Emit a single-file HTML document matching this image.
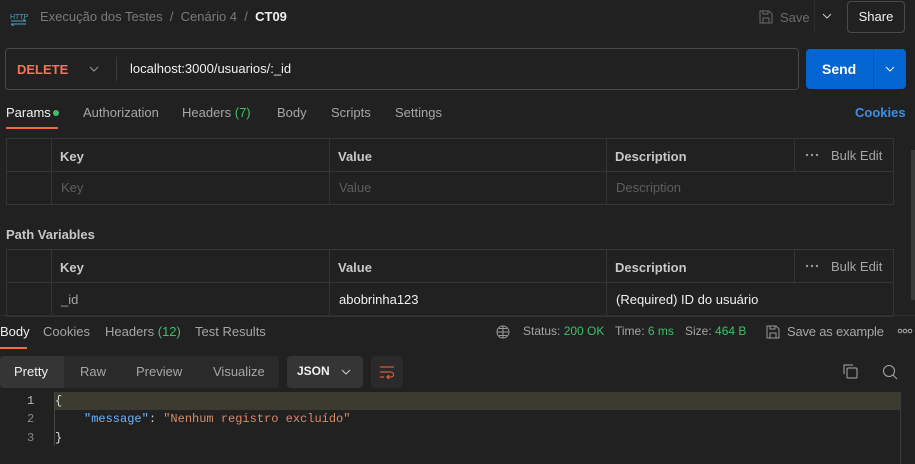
<!DOCTYPE html>
<html><head><meta charset="utf-8"><style>
*{box-sizing:border-box;margin:0;padding:0}
body{width:915px;height:464px;background:#212121;font-family:"Liberation Sans",sans-serif;font-size:13px;color:#a6a6a6;position:relative;overflow:hidden}
.a{position:absolute;white-space:nowrap}
.tb{position:absolute;border:1px solid #353535}
.vl{position:absolute;width:1px;background:#353535}
.hl{position:absolute;height:1px;background:#353535}
.h{font-weight:bold;color:#c8c8c8}
.ph{color:#5e5e5e}
.g{color:#3fbf6a}
.mono{font-family:"Liberation Mono",monospace;font-size:12px}
</style></head><body>
<svg class="a" style="left:10px;top:10px" width="18" height="16" viewBox="0 0 18 16"><text x="0" y="9" font-size="7" fill="#4aa3c9" font-family="Liberation Sans">HTTP</text><path d="M1 11h15M1 14h15M13 9l3 2M4 16l-3-2" stroke="#4aa3c9" fill="none" stroke-width="1"/></svg>
<div class="a" style="left:40px;top:9px;color:#7a7a7a">Execução dos Testes&nbsp;&nbsp;/&nbsp;&nbsp;Cenário 4&nbsp;&nbsp;/&nbsp;&nbsp;<b style="color:#f0f0f0">CT09</b></div>
<svg class="a" style="left:759px;top:10px" width="14" height="14" viewBox="0 0 14 14"><path d="M1 1h9l3 3v9H1z M4 1v3h5V1 M4 13V8h6v5" stroke="#6a6a6a" fill="none"/></svg>
<div class="a" style="left:780px;top:10px;color:#6a6a6a">Save</div>
<div class="vl" style="left:814px;top:0;height:34px;background:#2c2c2c"></div>
<svg class="a" style="left:822px;top:13px" width="10" height="6"><path d="M1 1l4 4 4-4" stroke="#ccc" fill="none"/></svg>
<div class="a" style="left:847px;top:1px;width:58px;height:32px;border:1px solid #4a4a4a;border-radius:4px;color:#f0f0f0;text-align:center;line-height:30px">Share</div>
<div class="a" style="left:5px;top:48px;width:794px;height:42px;border:1px solid #4a4a4a;border-radius:4px"></div>
<div class="a" style="left:17px;top:62px;color:#f2735c;font-weight:bold">DELETE</div>
<svg class="a" style="left:89px;top:66px" width="10" height="6"><path d="M1 1l4 4 4-4" stroke="#999" fill="none"/></svg>
<div class="vl" style="left:116px;top:57px;height:24px;background:#3a3a3a"></div>
<div class="a" style="left:130px;top:61px;color:#f0f0f0">localhost:3000/usuarios/:_id</div>
<div class="a" style="left:806px;top:49px;width:100px;height:40px;background:#0265d2;border-radius:4px"></div>
<div class="vl" style="left:873px;top:49px;height:40px;background:#0a55ad"></div>
<div class="a" style="left:822px;top:61px;color:#fff;font-weight:bold;font-size:14px">Send</div>
<svg class="a" style="left:885px;top:66px" width="10" height="6"><path d="M1 1l4 4 4-4" stroke="#fff" fill="none"/></svg>
<div class="a" style="left:6px;top:105px;color:#f0f0f0">Params</div>
<div class="a" style="left:53px;top:110px;width:6px;height:6px;border-radius:3px;background:#3fbf6a"></div>
<div class="a" style="left:6px;top:127px;width:52px;height:2px;background:#f26b3a"></div>
<div class="a" style="left:83px;top:105px">Authorization</div>
<div class="a" style="left:182px;top:105px">Headers <span class="g">(7)</span></div>
<div class="a" style="left:277px;top:105px">Body</div>
<div class="a" style="left:331px;top:105px">Scripts</div>
<div class="a" style="left:395px;top:105px">Settings</div>
<div class="a" style="left:855px;top:105px;color:#3d8fe6;font-weight:bold">Cookies</div>
<div class="tb" style="left:6px;top:138px;width:888px;height:67px"></div>
<div class="hl" style="left:6px;top:171px;width:888px"></div>
<div class="vl" style="left:51px;top:138px;height:67px"></div>
<div class="vl" style="left:329px;top:138px;height:67px"></div>
<div class="vl" style="left:606px;top:138px;height:67px"></div>
<div class="vl" style="left:794px;top:138px;height:33px"></div>
<div class="a h" style="left:60px;top:149px">Key</div>
<div class="a h" style="left:338px;top:149px">Value</div>
<div class="a h" style="left:615px;top:149px">Description</div>
<svg class="a" style="left:805px;top:153px" width="14" height="4"><circle cx="2" cy="2" r="1.2" fill="#999"/><circle cx="7" cy="2" r="1.2" fill="#999"/><circle cx="12" cy="2" r="1.2" fill="#999"/></svg>
<div class="a" style="left:831px;top:148px">Bulk Edit</div>
<div class="a ph" style="left:61px;top:180px">Key</div>
<div class="a ph" style="left:339px;top:180px">Value</div>
<div class="a ph" style="left:616px;top:180px">Description</div>
<div class="a h" style="left:6px;top:227px">Path Variables</div>
<div class="tb" style="left:6px;top:249px;width:888px;height:68px"></div>
<div class="hl" style="left:6px;top:282px;width:888px"></div>
<div class="vl" style="left:51px;top:249px;height:67px"></div>
<div class="vl" style="left:329px;top:249px;height:67px"></div>
<div class="vl" style="left:606px;top:249px;height:67px"></div>
<div class="vl" style="left:794px;top:249px;height:33px"></div>
<div class="a h" style="left:60px;top:260px">Key</div>
<div class="a h" style="left:338px;top:260px">Value</div>
<div class="a h" style="left:615px;top:260px">Description</div>
<svg class="a" style="left:805px;top:264px" width="14" height="4"><circle cx="2" cy="2" r="1.2" fill="#999"/><circle cx="7" cy="2" r="1.2" fill="#999"/><circle cx="12" cy="2" r="1.2" fill="#999"/></svg>
<div class="a" style="left:831px;top:259px">Bulk Edit</div>
<div class="a" style="left:61px;top:292px">_id</div>
<div class="a" style="left:339px;top:292px;color:#f0f0f0">abobrinha123</div>
<div class="a" style="left:616px;top:292px;color:#f0f0f0">(Required) ID do usuário</div>
<div class="a" style="left:911px;top:150px;width:4px;height:150px;background:#3a3a3a"></div>
<div class="hl" style="left:0;top:315px;width:915px;background:#2e2e2e"></div>
<div class="a" style="left:0;top:324px;color:#f0f0f0">Body</div>
<div class="a" style="left:0;top:347px;width:27px;height:2px;background:#f26b3a"></div>
<div class="a" style="left:43px;top:324px">Cookies</div>
<div class="a" style="left:105px;top:324px">Headers <span class="g">(12)</span></div>
<div class="a" style="left:195px;top:324px">Test Results</div>
<svg class="a" style="left:496px;top:325px" width="14" height="14" viewBox="0 0 14 14"><circle cx="7" cy="7" r="6" stroke="#999" fill="none"/><path d="M1 7h12M7 1v12M3 3.5h8M3 10.5h8" stroke="#999" fill="none"/></svg>
<div class="a" style="left:523px;top:324px;font-size:12px">Status: <span class="g">200 OK</span></div>
<div class="a" style="left:615px;top:324px;font-size:12px">Time: <span class="g">6 ms</span></div>
<div class="a" style="left:685px;top:324px;font-size:12px">Size: <span class="g">464 B</span></div>
<svg class="a" style="left:766px;top:325px" width="14" height="14" viewBox="0 0 14 14"><path d="M1 1h9l3 3v9H1z M4 1v3h5V1 M4 13V8h6v5" stroke="#999" fill="none"/></svg>
<div class="a" style="left:787px;top:324px;letter-spacing:-0.2px">Save as example</div>
<svg class="a" style="left:897px;top:328px" width="18" height="6"><circle cx="3" cy="3" r="1.8" stroke="#aaa" fill="none"/><circle cx="8" cy="3" r="1.8" stroke="#aaa" fill="none"/><circle cx="13" cy="3" r="1.8" stroke="#aaa" fill="none"/></svg>
<div class="a" style="left:0;top:356px;width:279px;height:32px;background:#2a2a2a;border-radius:4px"></div>
<div class="a" style="left:0;top:356px;width:64px;height:32px;background:#353535;border-radius:4px 0 0 4px"></div>
<div class="a" style="left:14px;top:364px;color:#f0f0f0">Pretty</div>
<div class="a" style="left:80px;top:364px">Raw</div>
<div class="a" style="left:136px;top:364px">Preview</div>
<div class="a" style="left:213px;top:364px">Visualize</div>
<div class="a" style="left:287px;top:356px;width:76px;height:32px;background:#353535;border-radius:4px"></div>
<div class="a" style="left:297px;top:364px;color:#f0f0f0;font-weight:bold;font-size:12px">JSON</div>
<svg class="a" style="left:341px;top:369px" width="10" height="6"><path d="M1 1l4 4 4-4" stroke="#ccc" fill="none"/></svg>
<div class="a" style="left:371px;top:356px;width:32px;height:32px;background:#2a2a2a;border-radius:4px"></div>
<svg class="a" style="left:379px;top:364px" width="16" height="16" viewBox="0 0 16 16"><path d="M1 3h14M1 8h11a2.5 2.5 0 010 5H8M10 11l-2 2 2 2M1 13h4" stroke="#f26b3a" fill="none"/></svg>
<svg class="a" style="left:843px;top:364px" width="15" height="15" viewBox="0 0 15 15"><path d="M1 10V1h9" stroke="#aaa" fill="none"/><rect x="4" y="4" width="10" height="10" rx="1" stroke="#aaa" fill="none"/></svg>
<svg class="a" style="left:882px;top:364px" width="16" height="16" viewBox="0 0 16 16"><circle cx="7" cy="7" r="5.5" stroke="#aaa" fill="none"/><path d="M11 11l4 4" stroke="#aaa"/></svg>
<div class="a" style="left:54px;top:392px;width:846px;height:18px;background:#3c3b30"></div>
<div class="vl" style="left:54px;top:392px;height:54px;background:#444"></div>
<div class="vl" style="left:900px;top:392px;height:72px;background:#3a3a3a"></div>
<div class="a mono" style="left:27px;top:394px;color:#bbb">1</div>
<div class="a mono" style="left:27px;top:412px;color:#888">2</div>
<div class="a mono" style="left:27px;top:431px;color:#888">3</div>
<div class="a mono" style="left:55px;top:394px;color:#ddd">{</div>
<div class="a mono" style="left:84px;top:412px"><span style="color:#6cb6ff">"message"</span><span style="color:#ccc">: </span><span style="color:#d98a6a">"Nenhum registro excluído"</span></div>
<div class="a mono" style="left:55px;top:431px;color:#ddd">}</div>
</body></html>
